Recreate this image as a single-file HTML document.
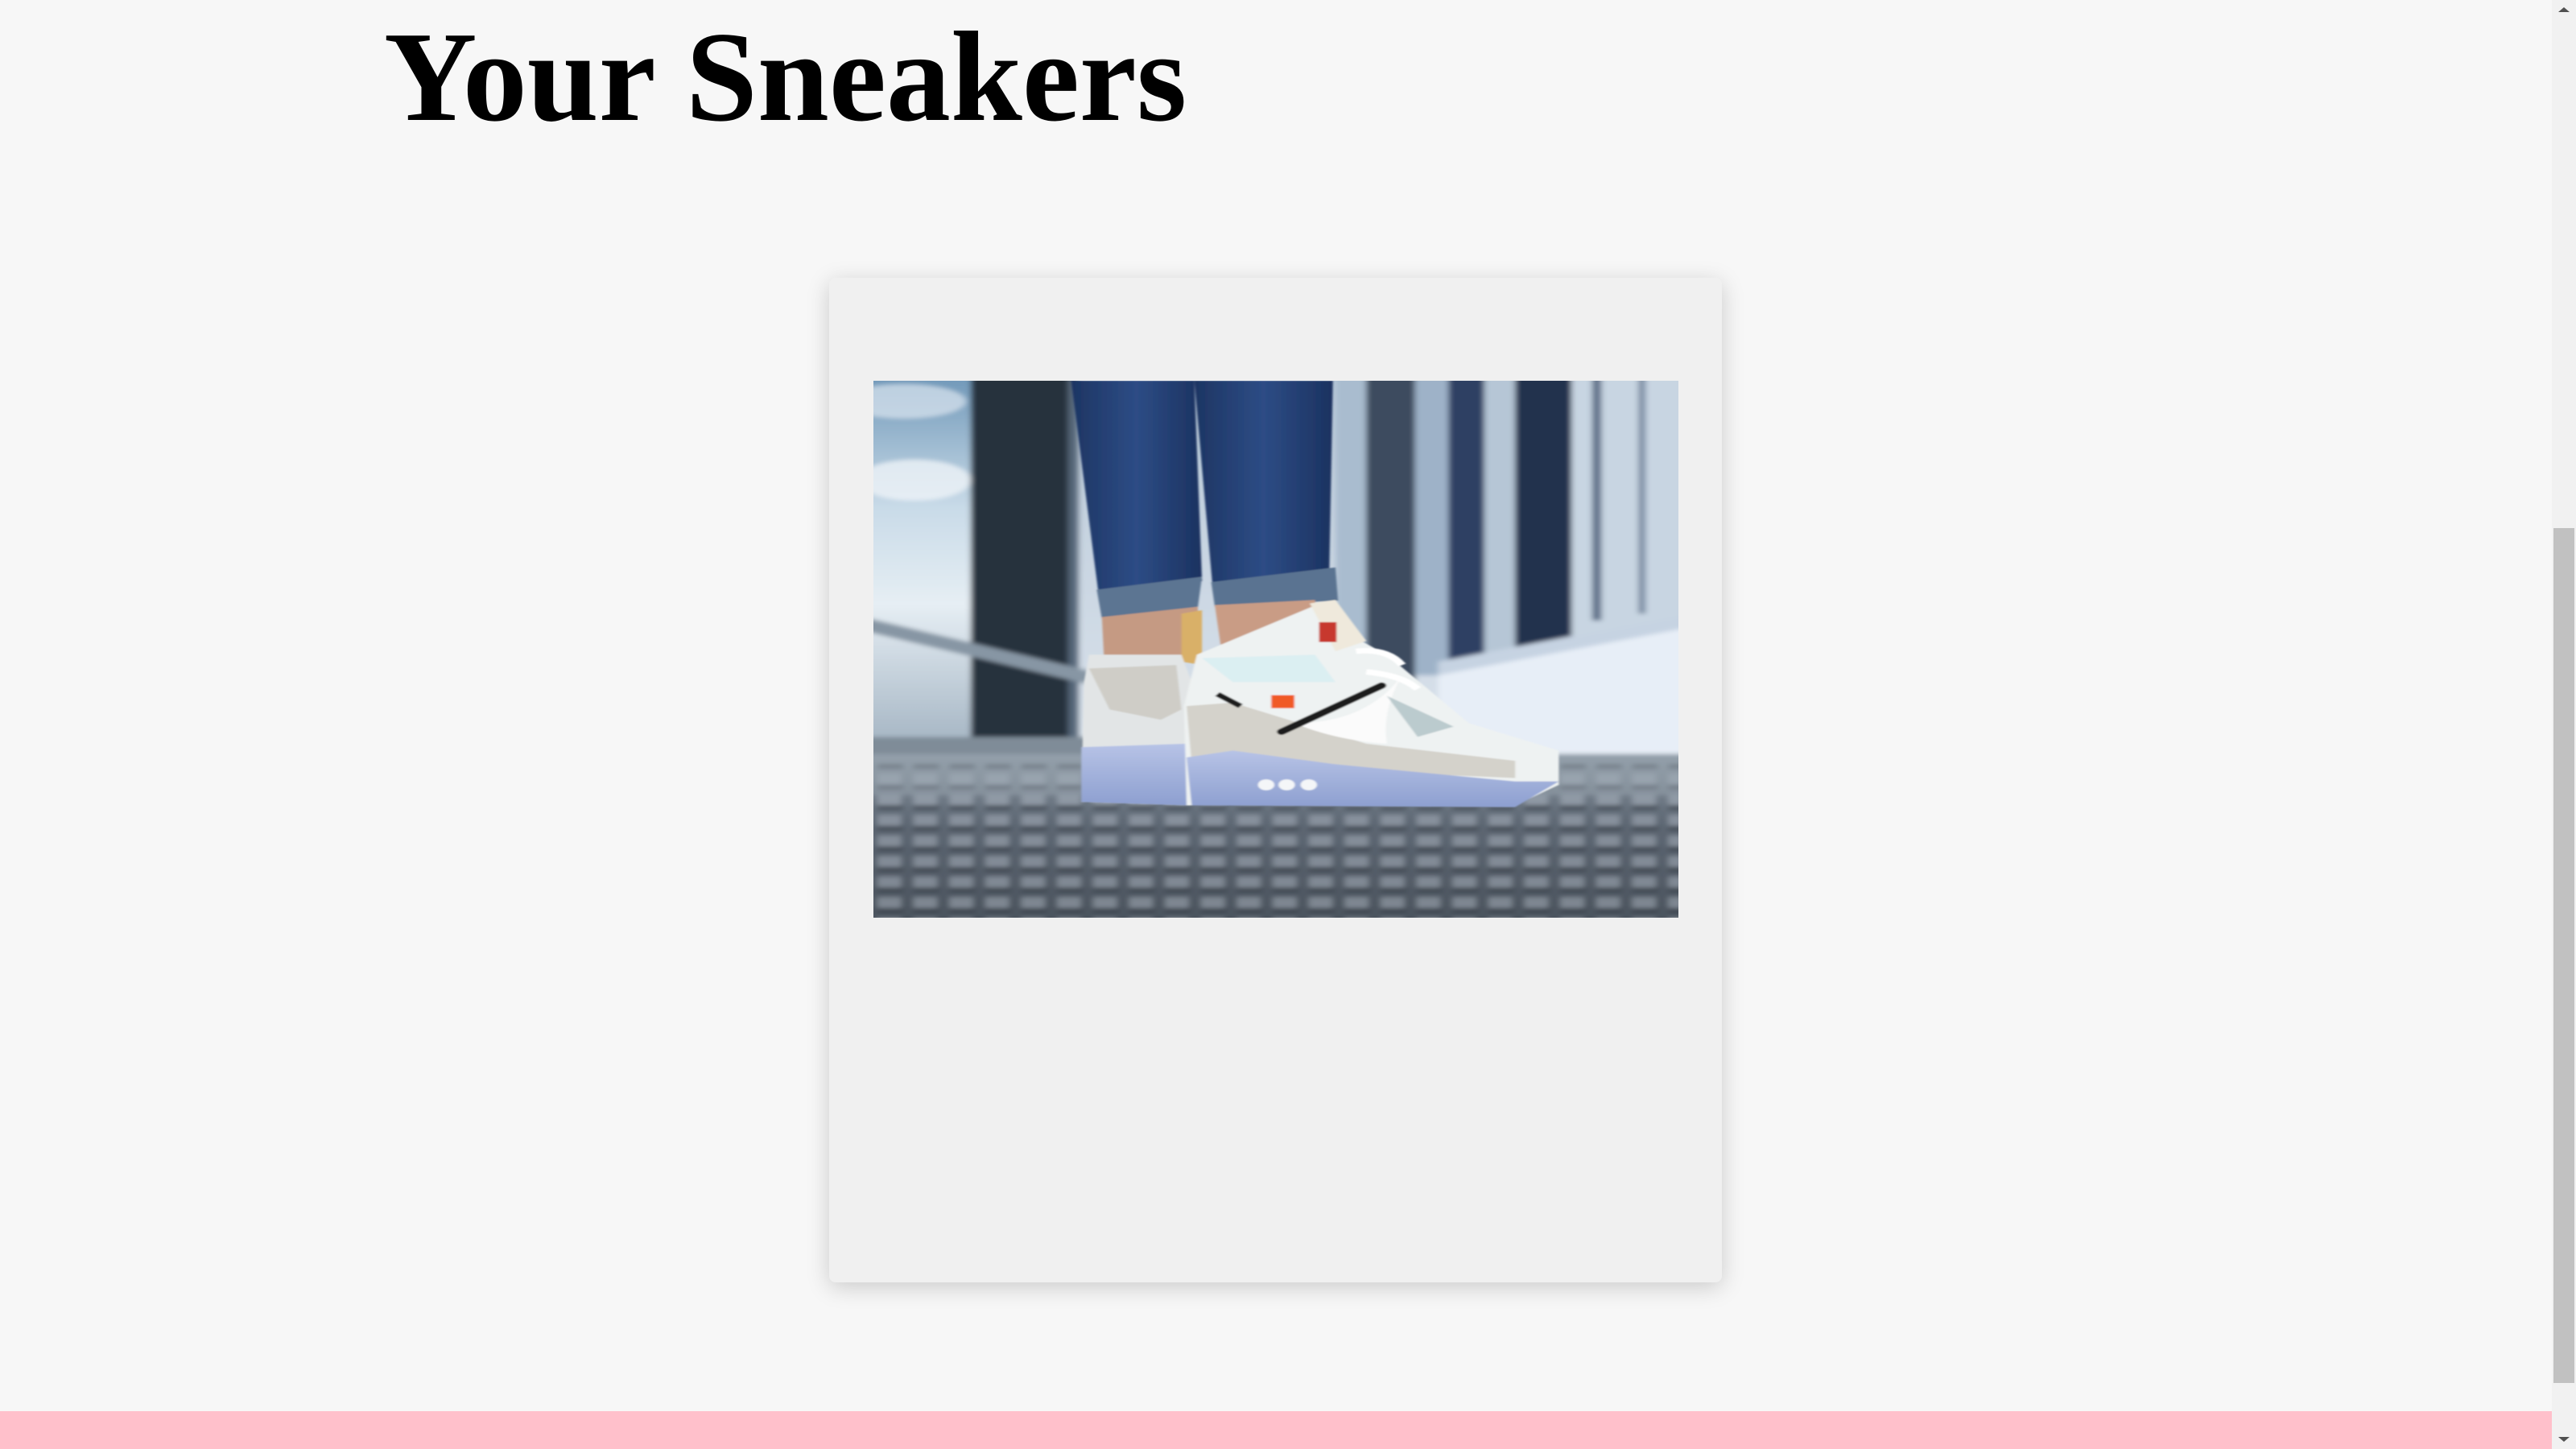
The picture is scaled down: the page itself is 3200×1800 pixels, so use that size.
<!DOCTYPE html>
<html><head><meta charset="utf-8"><style>
html,body{margin:0;padding:0;}
body{width:3200px;height:1800px;background:#f7f7f7;position:relative;overflow:hidden;font-family:"Liberation Serif",serif;}
h1{position:absolute;left:477px;margin:0;font-size:160px;font-weight:bold;line-height:1;color:#000;top:15px;}
.card{position:absolute;left:1030px;top:345px;width:1109px;height:1248px;background:#f0f0f0;border-radius:8px;box-shadow:0 6px 28px rgba(0,0,0,0.18);}
.img{position:absolute;left:1085px;top:473px;width:1000px;height:667px;overflow:hidden;}
.pink{position:absolute;left:0;top:1753px;width:3170px;height:47px;background:#ffc0cb;}
.sb{position:absolute;left:3170px;top:0;width:30px;height:1800px;background:#f1f1f1;}
.thumb{position:absolute;left:3172px;top:656px;width:26px;height:1062px;background:#c1c1c1;}
</style></head><body>
<h1>Your Sneakers</h1>
<div class="card"></div>
<div class="img">
<svg width="1000" height="667" viewBox="0 0 1568 1568" preserveAspectRatio="none" xmlns="http://www.w3.org/2000/svg">
<defs>
<linearGradient id="sky" x1="0" y1="0" x2="0" y2="1"><stop offset="0" stop-color="#6f97b8"/><stop offset="0.35" stop-color="#c9dbe8"/><stop offset="0.6" stop-color="#e6eef4"/><stop offset="1" stop-color="#9fb0bf"/></linearGradient>
<linearGradient id="mid" x1="0" y1="0" x2="0" y2="1"><stop offset="0" stop-color="#b9c9d9"/><stop offset="1" stop-color="#e9eef3"/></linearGradient>
<linearGradient id="jean" x1="0" y1="0" x2="1" y2="0"><stop offset="0" stop-color="#1d3563"/><stop offset="0.5" stop-color="#2d4c85"/><stop offset="1" stop-color="#1b3260"/></linearGradient>
<linearGradient id="floor" x1="0" y1="0" x2="0" y2="1"><stop offset="0" stop-color="#8e9aa6"/><stop offset="0.4" stop-color="#5d6773"/><stop offset="1" stop-color="#4a525c"/></linearGradient>
<linearGradient id="sole" x1="0" y1="0" x2="0" y2="1"><stop offset="0" stop-color="#b7c3e6"/><stop offset="1" stop-color="#8d9fd0"/></linearGradient>
<pattern id="grate" width="70" height="60" patternUnits="userSpaceOnUse"><rect x="8" y="8" width="46" height="34" fill="#b8c2cc" opacity="0.45"/><rect x="8" y="40" width="50" height="12" fill="#2b323a" opacity="0.6"/></pattern>
<filter id="bl" x="0" y="0" width="1" height="1"><feGaussianBlur stdDeviation="6"/></filter>
<filter id="bl2"><feGaussianBlur stdDeviation="2"/></filter>
</defs>
<g filter="url(#bl)">
<rect x="-20" y="-20" width="1610" height="1610" fill="url(#mid)"/>
<rect x="-20" y="-20" width="220" height="1120" fill="url(#sky)"/>
<ellipse cx="80" cy="290" rx="110" ry="60" fill="#eef3f7" opacity="0.8"/>
<ellipse cx="60" cy="60" rx="120" ry="50" fill="#dbe6ef" opacity="0.7"/>
<rect x="190" y="-20" width="190" height="1080" fill="#27313c"/>
<rect x="380" y="-20" width="20" height="1080" fill="#56677a"/>
<rect x="900" y="-20" width="70" height="920" fill="#a9bccf"/>
<rect x="960" y="-20" width="95" height="900" fill="#3c4b5e"/>
<rect x="1055" y="-20" width="70" height="880" fill="#9eb2c8"/>
<rect x="1120" y="-20" width="70" height="860" fill="#2f4163"/>
<rect x="1190" y="-20" width="60" height="840" fill="#b6c6d6"/>
<rect x="1250" y="-20" width="110" height="820" fill="#23324e"/>
<rect x="1360" y="-20" width="230" height="800" fill="#c8d5e2"/>
<rect x="1400" y="-20" width="18" height="720" fill="#5d7088"/>
<rect x="1490" y="-20" width="14" height="700" fill="#7a8ca2"/>
<polygon points="1100,820 1590,680 1590,1140 1100,1110" fill="#e7eef7"/>
<polygon points="1100,820 1590,680 1590,720 1100,860" fill="#c6d3e2"/>
<polygon points="1330,1110 1590,1140 1590,1190 1330,1150" fill="#a0a8b1"/>
<polygon points="-20,690 430,850 430,890 -20,730" fill="#8796a4"/>
<rect x="-20" y="1040" width="450" height="60" fill="#7f8c98"/>
<rect x="-20" y="1090" width="1610" height="500" fill="url(#floor)"/>
<rect x="-20" y="1120" width="1610" height="470" fill="url(#grate)"/>
<rect x="-20" y="1090" width="1610" height="120" fill="#9aa5b0" opacity="0.5"/>
</g>
<g filter="url(#bl2)">
<polygon points="385,0 625,0 640,585 440,640" fill="url(#jean)"/>
<polygon points="625,0 895,0 888,555 660,590" fill="url(#jean)"/>
<polygon points="435,610 640,572 632,660 445,695" fill="#5b7592"/>
<polygon points="658,588 900,545 905,642 665,660" fill="#5a7391"/>
<polygon points="445,690 632,660 630,820 450,835" fill="#c59a83"/>
<polygon points="600,680 640,670 640,830 600,820" fill="#d9b067"/>
<polygon points="665,655 860,640 870,810 680,810" fill="#c99c85"/>
<polygon points="420,800 600,800 625,900 610,1240 405,1230 410,880" fill="#e2e5e6"/>
<polygon points="420,840 590,830 600,960 560,990 460,960" fill="#cfcdc7"/>
<polygon points="405,1070 610,1060 610,1240 405,1230" fill="url(#sole)"/>
<polygon points="630,800 870,650 950,760 1000,800 1160,1000 1335,1080 1335,1180 1250,1240 610,1240 605,950" fill="#eef2f2"/>
<polygon points="640,810 860,800 900,880 700,880" fill="#dbeff2"/>
<polygon points="610,950 700,940 960,1060 1250,1110 1250,1160 620,1120" fill="#d4d2cb"/>
<polygon points="610,1100 700,1080 900,1120 1250,1170 1335,1170 1250,1245 620,1240" fill="url(#sole)"/>
<circle cx="765" cy="1180" r="16" fill="#f4f6f8"/><circle cx="805" cy="1180" r="16" fill="#f4f6f8"/><circle cx="848" cy="1180" r="16" fill="#f4f6f8"/>
<path d="M820 1000 Q960 1000 1030 860 Q990 960 1000 1060 Q900 1050 820 1000Z" fill="#fbfbfb"/>
<rect x="775" y="918" width="45" height="38" fill="#f05a28"/>
<path d="M795 1025 L990 890" stroke="#1c1c1c" stroke-width="18" stroke-linecap="round"/>
<path d="M670 915 L715 950" stroke="#1c1c1c" stroke-width="14"/>
<path d="M850 650 L900 640 L960 760 L900 790 Z" fill="#efe9dc"/>
<rect x="868" y="705" width="34" height="58" fill="#c7372f"/>
<path d="M940 790 Q1000 780 1030 830 M960 850 Q1030 860 1060 900" stroke="#ffffff" stroke-width="16" fill="none"/>
<path d="M1000 920 L1060 1040 L1130 1010 Z" fill="#9ab0b5" opacity="0.6"/>
</g>
</svg>
</div>
<div class="pink"></div>
<div class="sb"></div>
<div class="thumb"></div>
<svg style="position:absolute;left:3170px;top:0" width="30" height="1800">
<polygon points="15,9 22,15 8,15" fill="#505050"/>
<polygon points="15,1791 22,1785 8,1785" fill="#505050"/>
</svg>
</body></html>
